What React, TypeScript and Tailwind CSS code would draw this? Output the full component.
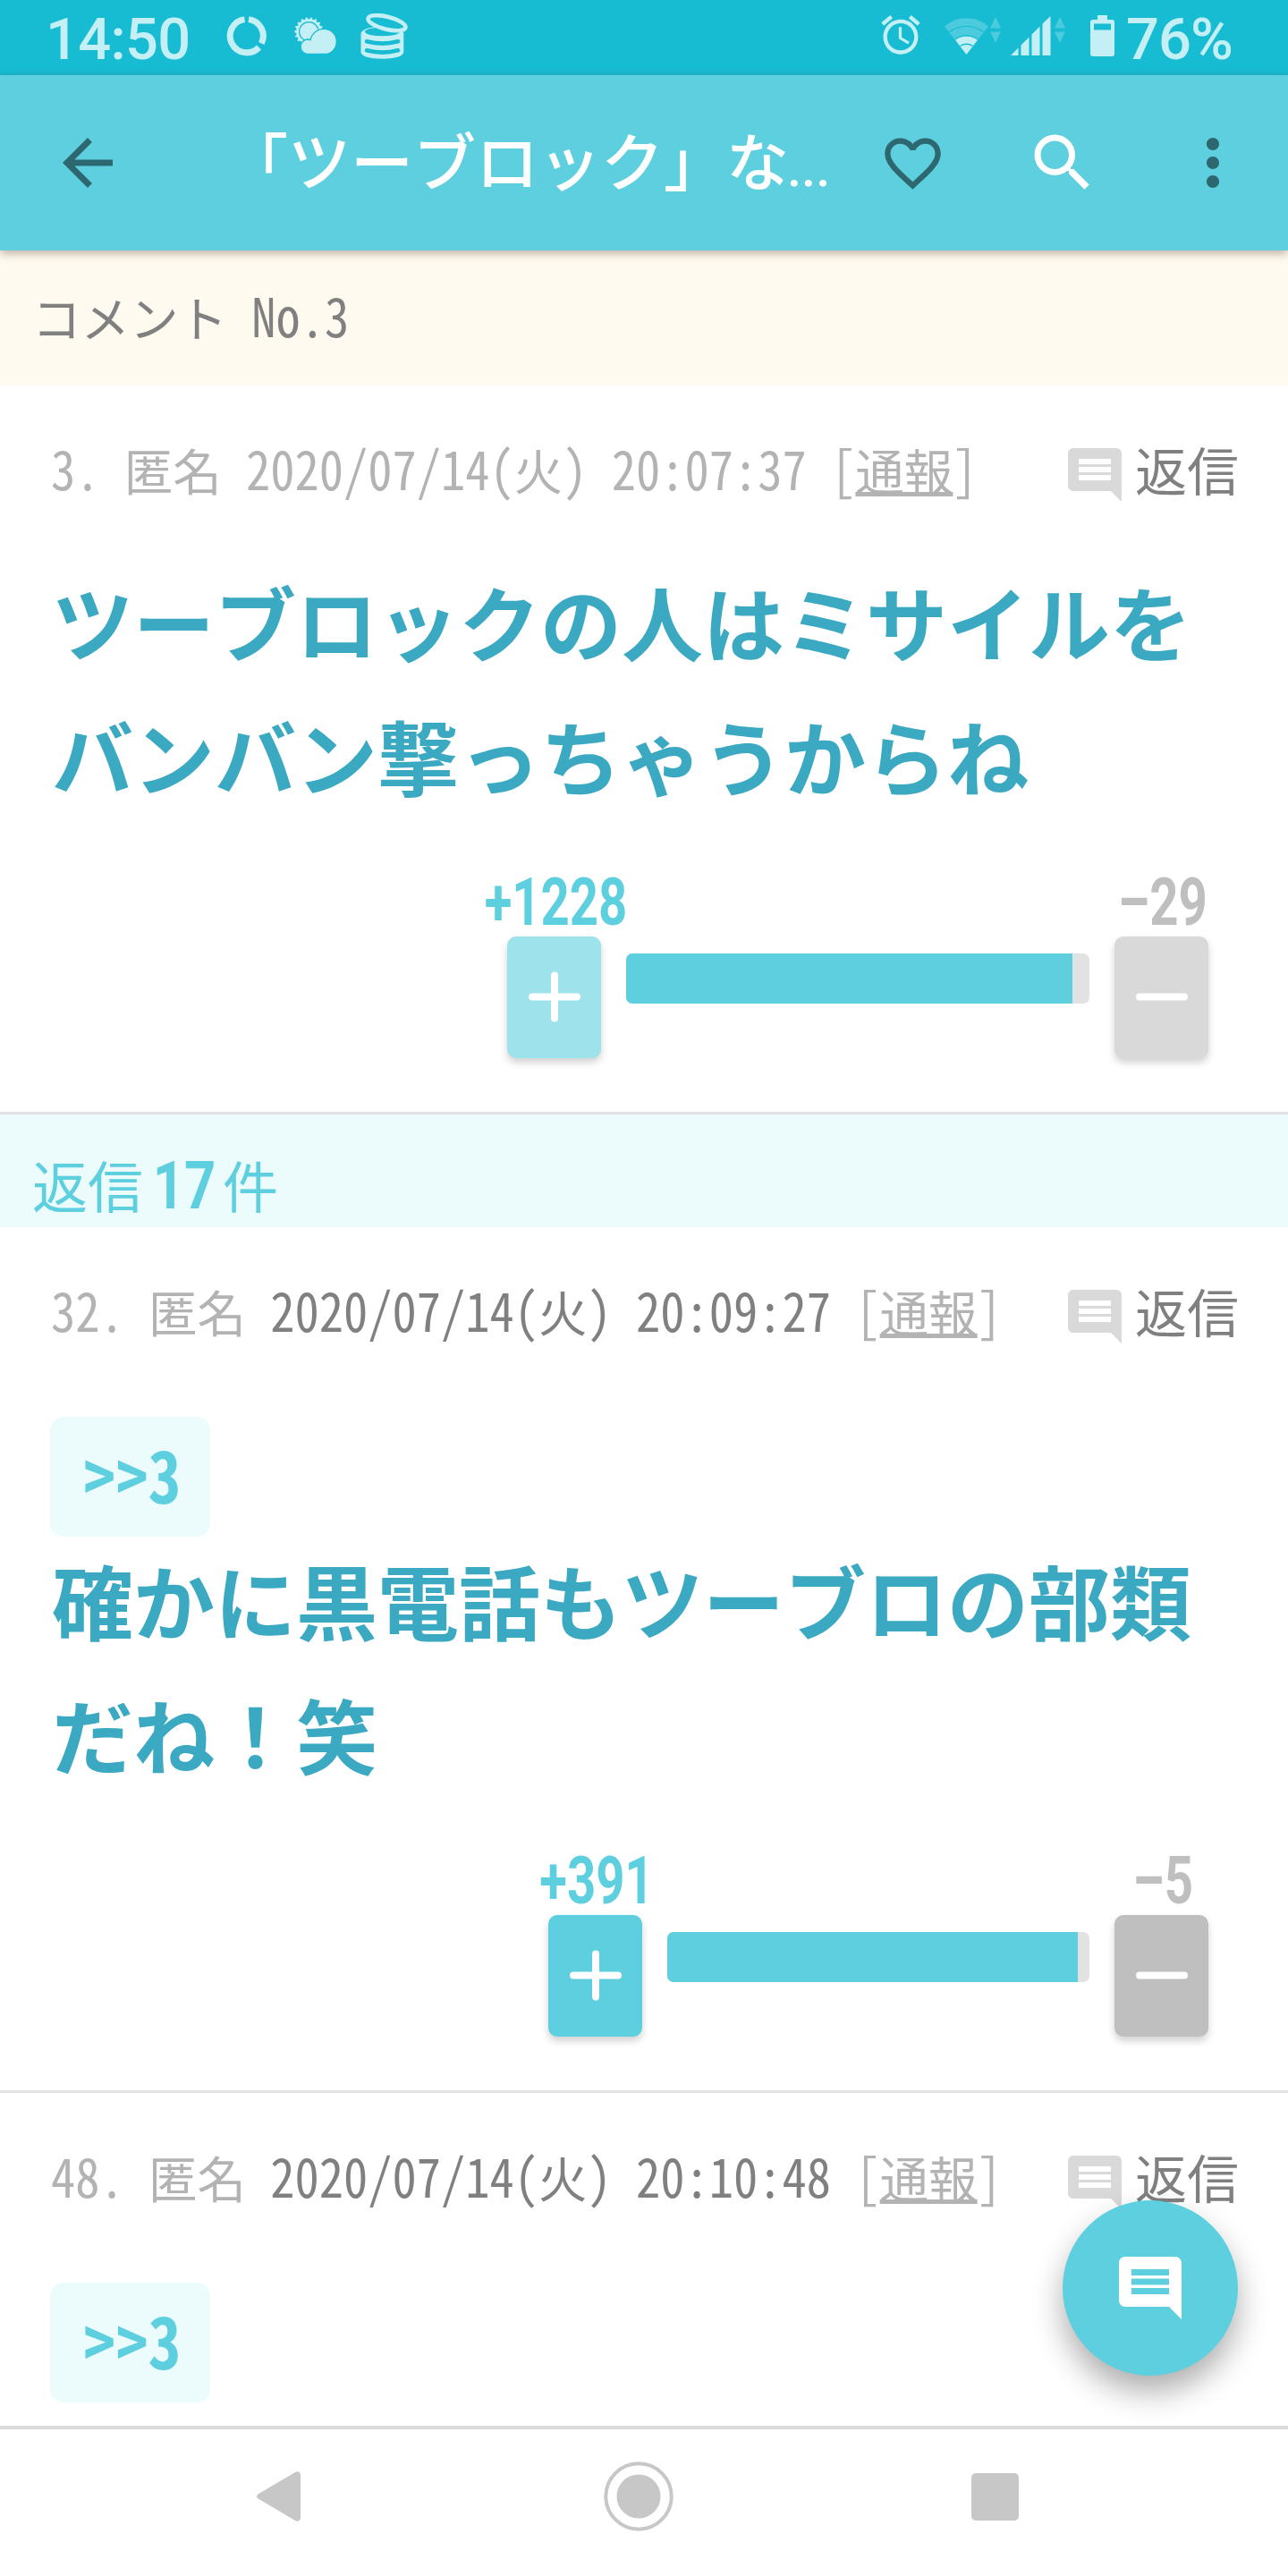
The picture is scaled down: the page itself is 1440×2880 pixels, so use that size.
import type { ReactNode } from 'react'
import {
  MdAccessAlarm,
  MdArrowBack,
  MdComment,
  MdFavoriteBorder,
  MdMoreVert,
  MdSearch,
} from 'react-icons/md'

type Post = {
  no: number
  date: string
  weekday: string
  time: string
  muted?: boolean
  voted?: boolean
  anchor?: string
  body?: string[]
  plus?: string
  minus?: string
  barWidth?: number
  fill?: number
}

const mainPost: Post = {
  no: 3,
  date: '2020/07/14',
  weekday: '火',
  time: '20:07:37',
  muted: true,
  voted: true,
  body: ['ツーブロックの人はミサイルを', 'バンバン撃っちゃうからね'],
  plus: '+1228',
  minus: '–29',
  barWidth: 518,
  fill: 96.4,
}

const replies: Post[] = [
  {
    no: 32,
    date: '2020/07/14',
    weekday: '火',
    time: '20:09:27',
    anchor: '>>3',
    body: ['確かに黒電話もツーブロの部類', 'だね！笑'],
    plus: '+391',
    minus: '–5',
    barWidth: 472,
    fill: 97.3,
  },
  {
    no: 48,
    date: '2020/07/14',
    weekday: '火',
    time: '20:10:48',
    anchor: '>>3',
  },
]

// 18 spikes around the sun
const sunRays = Array.from({ length: 36 }, (_, i) => {
  const r = i % 2 ? 13.6 : 16.6
  const a = (i * Math.PI) / 18
  return `${16.3 + r * Math.cos(a)},${17.3 + r * Math.sin(a)}`
}).join(' ')

// half width latin, stretched a little from the baseline
function Half({ children }: { children: ReactNode }) {
  return (
    <span className="inline-block whitespace-pre leading-none origin-[50%_93.6%] scale-y-[1.1] [font-feature-settings:'hwid'_1]">
      {children}
    </span>
  )
}

function DataArrows() {
  return (
    <svg width="12" height="29" viewBox="0 0 12 29" fill="#4bcbdd">
      <path d="M6 0l6 12.5H0zM0 16.5h12L6 29z" />
    </svg>
  )
}

function StatusBar() {
  return (
    <div className="h-[84px] bg-[#17bcd3] text-[#c4eff5] flex items-start pl-[51px] pr-[59px] pt-[16px] font-['Roboto',sans-serif]">
      <span className="w-[202px] text-[65px] leading-[57px] font-medium tracking-[-0.7px]">
        14:50
      </span>
      <svg
        className="mt-[1px]"
        width="46"
        height="46"
        viewBox="0 0 46 46"
        fill="none"
        stroke="currentColor"
        strokeWidth="7"
      >
        <path d="M25 4.600A18.700 18.700 0 0 1 39.300 31.500M36.500 36A18.700 18.700 0 1 1 20.500 4.600" />
      </svg>
      <svg
        className="ml-[30px] mt-[2px]"
        width="48"
        height="43"
        viewBox="0 0 48 43"
      >
        <polygon points={sunRays} fill="currentColor" />
        <circle cx="16.300" cy="17.300" r="10.700" fill="currentColor" stroke="#17bcd3" strokeWidth="1.200" />
        <path
          d="M14.500 42.500a8.300 8.300 0 0 1 0-16.500c1.300 0 2.500.2 3.500.7C19.500 19.500 26 14.300 33 14.300c8.500 0 14.300 6.500 14.300 14 0 8-5.800 14.200-13.300 14.200z"
          fill="currentColor"
          stroke="#17bcd3"
          strokeWidth="1.300"
        />
      </svg>
      <svg
        className="ml-[26px] mt-[-1px]"
        width="54"
        height="52"
        viewBox="0 0 54 52"
        fill="none"
        strokeLinecap="round"
      >
        <path
          d="M.5 23C.5 12 48.300 12 48.300 23v20c0 5-10 7.700-24 7.700S.5 48 .5 43z"
          fill="currentColor"
        />
        <ellipse cx="24.500" cy="20.500" rx="19.500" ry="4.800" fill="#17bcd3" />
        <path
          d="M7 31.300Q24.500 36 42 31.300M7 41.300Q24.500 46 42 41.300"
          stroke="#17bcd3"
          strokeWidth="4.600"
        />
        <ellipse
          cx="29.500"
          cy="10.700"
          rx="21.500"
          ry="7"
          transform="rotate(14 29.5 10.7)"
          fill="#17bcd3"
          stroke="currentColor"
          strokeWidth="4.600"
        />
      </svg>

      <MdAccessAlarm className="ml-auto mt-[-3px]" size={52} />
      <svg
        className="ml-[23px] mt-[4px]"
        width="49"
        height="41"
        viewBox="0 0 49 41"
      >
        <path d="M24.500 41L0 9.500C14-3 35-3 49 9.500z" fill="#4bcbdd" />
        <path d="M5 16c12-9 27-9 39 0" fill="none" stroke="#17bcd3" strokeWidth="1.200" />
        <path d="M24.500 41L12 24.500c7-5.500 18-5.500 25 0z" fill="currentColor" />
        <path d="M17.500 31.500c4-3 10-3 14 0M12 24c7-5.500 18-5.500 25 0" fill="none" stroke="#17bcd3" strokeWidth="1.300" />
      </svg>
      <div className="ml-[2px] mt-[3px]">
        <DataArrows />
      </div>
      <svg
        className="ml-[11px] mt-[2px]"
        width="45"
        height="44"
        viewBox="0 0 45 44"
        fill="currentColor"
      >
        <path d="M0 44l8.500-8.500V44zM11.500 32.500l9-9V44h-9zM23.500 20.500l9-9V44h-9zM35.500 8.500L44.500 0v44h-9z" />
      </svg>
      <div className="ml-[4px] mt-[3px]">
        <DataArrows />
      </div>
      <svg
        className="ml-[28px] mt-[1px]"
        width="27"
        height="46"
        viewBox="0 0 27 46"
        fill="currentColor"
      >
        <path
          fillRule="evenodd"
          d="M8 0h11v5h5a3 3 0 0 1 3 3v35a3 3 0 0 1-3 3H3a3 3 0 0 1-3-3V8a3 3 0 0 1 3-3h5zM4 9.500v7h19v-7z"
        />
      </svg>
      <span className="ml-[13px] w-[122px] text-[65px] leading-[57px] font-medium tracking-[-1px] whitespace-nowrap">
        76%
      </span>
    </div>
  )
}

function Header() {
  return (
    <header className="relative z-10 h-[196px] bg-[#5dcfdf] flex items-center px-[42px] pl-[56px] text-[#2d676f] shadow-[0_3px_10px_rgba(60,20,20,0.35)]">
      <MdArrowBack size={84} />
      <h1 className="mt-[-4px] ml-[112px] w-[731px] text-[70px] leading-none text-white font-medium whitespace-nowrap">
        「ツーブロック」な
        <span className="ml-[-2px] font-['Roboto',sans-serif] text-[58px]">...</span>
      </h1>
      <MdFavoriteBorder className="flex-none" size={75} />
      <MdSearch className="ml-[88px] flex-none text-white" size={84} />
      <MdMoreVert className="ml-auto flex-none" size={84} />
    </header>
  )
}

function VoteButton({ type, voted }: { type: 'plus' | 'minus'; voted?: boolean }) {
  const active = type === 'plus' ? 'bg-[#5dcfdf]' : 'bg-[#bfbfbf]'
  const faded = type === 'plus' ? 'bg-[#9ee2eb]' : 'bg-[#d9d9d9]'
  return (
    <button
      className={`w-[105px] h-[136px] flex-none rounded-[10px] flex items-center justify-center shadow-[0_5px_8px_rgba(0,0,0,0.18)] ${voted ? faded : active}`}
    >
      <svg
        width="58"
        height="58"
        viewBox="0 0 58 58"
        stroke="white"
        strokeWidth="8"
        strokeLinecap="round"
      >
        <path d={type === 'plus' ? 'M4 28.500h50M29 4.500v48' : 'M4 28.500h50'} />
      </svg>
    </button>
  )
}

function Count({ className, children }: { className: string; children: ReactNode }) {
  return (
    <span
      className={`mb-[9px] ml-[3px] h-[65px] font-['Roboto',sans-serif] text-[75px] leading-[71px] font-bold whitespace-nowrap scale-x-[0.75] ${className}`}
    >
      {children}
    </span>
  )
}

function Votes({ post }: { post: Post }) {
  return (
    <div className="mt-[55px] mb-[60px] pr-[89px] flex justify-end">
      <div className="w-[105px] flex flex-col items-center">
        <Count className="text-[#5dcfdf]">{post.plus}</Count>
        <VoteButton type="plus" voted={post.voted} />
      </div>
      <div
        className="mt-[93px] mx-[28px] h-[56px] rounded-[7px] overflow-hidden bg-[#e2e2e2]"
        style={{ width: post.barWidth }}
      >
        <div className="h-full bg-[#5dcfdf]" style={{ width: `${post.fill}%` }} />
      </div>
      <div className="w-[105px] flex flex-col items-center">
        <Count className="text-[#bfbfbf]">{post.minus}</Count>
        <VoteButton type="minus" voted={post.voted} />
      </div>
    </div>
  )
}

function PostItem({ post }: { post: Post }) {
  return (
    <article className="pt-[64px] border-b-[3px] border-[#e2e2e2]">
      <div className="h-[72px] pl-[57px] pr-[56px] flex items-start text-[#b3b3b3]">
        <p className="mt-[3px] text-[54.5px] leading-none whitespace-pre">
          <Half>{post.no}. </Half>匿名
          <span className={post.muted ? '' : 'text-[#808080]'}>
            <Half>{` ${post.date}(`}</Half>{post.weekday}
            <Half>{`) ${post.time} `}</Half>
          </span>
          <Half>[</Half>
          <span className="underline decoration-[5px] underline-offset-[2px] [text-decoration-skip-ink:none]">通報</span>
          <Half>]</Half>
        </p>
        <MdComment className="ml-auto flex-none text-[#d9d9d9]" size={72} />
        <span className="ml-[9px] w-[115px] text-[58px] leading-none text-[#808080] whitespace-nowrap">
          返信
        </span>
      </div>
      {post.anchor && (
        <div className="mt-[76px] ml-[56px] w-[179px] h-[134px] pl-[37px] pt-[29px] rounded-[15px] bg-[#ecfbfc] text-[73px] leading-none font-bold text-[#5dcfdf]">
          <Half>{post.anchor}</Half>
        </div>
      )}
      {post.body ? (
        <div
          className={`pl-[58px] text-[91px] leading-[150px] font-bold text-[#3ba9c1] whitespace-nowrap ${post.anchor ? '-mt-[6px]' : 'mt-[51px]'}`}
        >
          {post.body.map((line) => (
            <p key={line}>{line}</p>
          ))}
        </div>
      ) : (
        <div className="h-[150px]" />
      )}
      {post.plus && <Votes post={post} />}
    </article>
  )
}

function NavBar() {
  return (
    <nav className="h-[168px] flex-none border-t-[4px] border-[#dbdbdb] bg-white flex items-center pb-[14px] text-[#c7c7c7]">
      <svg className="ml-[287px]" width="50" height="56" viewBox="0 0 50 56" fill="currentColor">
        <path d="M1.500 25.500L43 1c3-2 6 0 6 3v48c0 3-3 5-6 3L1.500 30.500c-2-1.500-2-3.500 0-5z" />
      </svg>
      <svg className="ml-[338px]" width="78" height="78" viewBox="0 0 78 78" fill="currentColor">
        <circle cx="39" cy="39" r="36.700" fill="none" stroke="currentColor" strokeWidth="4" />
        <circle cx="39" cy="39" r="24.500" />
      </svg>
      <div className="ml-[333px] w-[53px] h-[53px] rounded-[5px] bg-[#c7c7c7]" />
    </nav>
  )
}

export default function App() {
  return (
    <div
      lang="ja"
      className="relative w-[1440px] h-[2880px] overflow-hidden bg-white flex flex-col font-['Noto_Sans_CJK_JP',sans-serif] [font-kerning:none] [text-spacing-trim:space-all]"
    >
      <StatusBar />
      <Header />
      <main className="flex-1 min-h-0 overflow-hidden">
        <div className="h-[151px] pl-[36px] pt-[47px] bg-[#fffaef] text-[54.5px] leading-none text-[#808080]">
          コメント<Half> No.3</Half>
        </div>
        <PostItem post={mainPost} />
        <div className="h-[126px] pl-[36px] pt-[42px] bg-[#ecfbfc] text-[62px] leading-none text-[#5dcfdf] flex items-baseline">
          <span className="w-[127px] whitespace-nowrap">返信</span>
          <span className="font-['Roboto',sans-serif] text-[75px] leading-none font-bold scale-x-[0.82]">
            17
          </span>
          <span>件</span>
        </div>
        {replies.map((post) => (
          <PostItem key={post.no} post={post} />
        ))}
      </main>
      <NavBar />
      <button className="absolute right-[56px] bottom-[224px] w-[196px] h-[196px] rounded-full bg-[#5dcfdf] text-white flex items-center justify-center shadow-[0_18px_34px_rgba(0,0,0,0.32)]">
        <MdComment size={84} />
      </button>
    </div>
  )
}
